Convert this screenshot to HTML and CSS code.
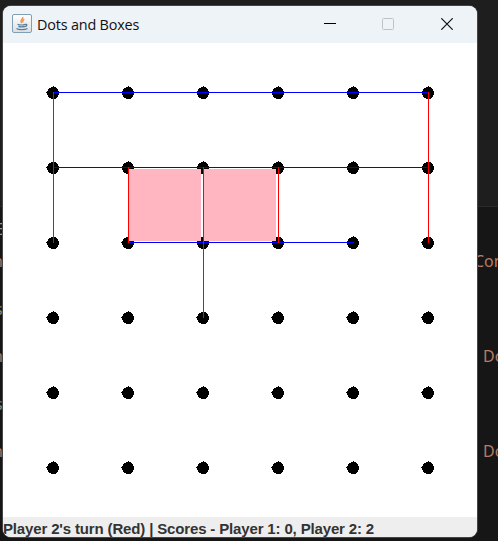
FILE: index.html
```
<!DOCTYPE html>
<html lang="en">
<head>
<meta charset="utf-8">
<title>Dots and Boxes</title>
<link rel="stylesheet" href="styles.css">
</head>
<body>
<div class="desktop">
  <div class="editor-seam"></div>
  <span class="code c1">Con</span>
  <span class="code c2">Do</span>
  <span class="code c3">Do</span>
  <span class="code l1">E</span>
  <span class="code l2">n</span>
  <span class="code l3">s</span>
  <span class="code l4">n</span>
  <span class="code l5">s</span>
  <span class="code l6">n</span>
  <main class="window">
    <header class="titlebar">
      <svg class="java" width="20" height="20" viewBox="0 0 20 20">
        <defs><linearGradient id="tile" x1="0" y1="0" x2="0" y2="1"><stop offset="0" stop-color="#fff"/><stop offset="1" stop-color="#dcdee0"/></linearGradient></defs>
        <rect x=".5" y=".5" width="19" height="18" rx="1.5" fill="url(#tile)" stroke="#7f9fb6"/>
        <path d="M10.700 3c1 2-3.500 2.700-1 6M12.300 5.200c-2 1.200-2 1.800-1 3.300" fill="none" stroke="#ef9448" stroke-width="1.400"/>
        <path d="M5.500 10.200c2 .8 6 .8 8 0M6.300 12.400c2 .6 4.500.6 6.400 0M13.500 10.200c2.200 0 1.500 2-.7 2.500M4.500 14.500c2 1.500 8.500 1.500 11 0" fill="none" stroke="#56809e" stroke-width="1.200"/>
      </svg>
      <h1>Dots and Boxes</h1>
      <div class="controls">
        <svg width="12" height="12" viewBox="0 0 12 12"><path d="M0 5.500h12" stroke="#000"/></svg>
        <svg width="12" height="12" viewBox="0 0 12 12"><rect x=".5" y=".5" width="11" height="11" rx="1" fill="none" stroke="#bfc2c5"/></svg>
        <svg width="12" height="12" viewBox="0 0 12 12"><path d="M.3.300l11.400 11.400M11.700.300L.3 11.700" stroke="#111" stroke-width="1.200"/></svg>
      </div>
    </header>
    <svg class="board" width="474" height="474" viewBox="3 43 474 474" shape-rendering="crispEdges">
      <defs>
        <path id="dot" d="M53 86h1v1h2v1h1v1h1v2h1v4h-1v2h-1v1h-1v1h-5v-1h-2v-1h-1v-2h-1v-2h-1v-1h1v-1h1v-2h1v-1h2v-1h2z"/>
        <g id="row"><use href="#dot"/><use href="#dot" x="75"/><use href="#dot" x="150"/><use href="#dot" x="225"/><use href="#dot" x="300"/><use href="#dot" x="375"/></g>
      </defs>
      <use href="#row"/><use href="#row" y="75"/><use href="#row" y="150"/><use href="#row" y="225"/><use href="#row" y="300"/><use href="#row" y="375"/>
      <path fill="#ffb6c1" d="M129 169h72v72h-72zM204 169h72v72h-72z"/>
      <path fill="#00f" d="M53 92h376v1H53zM53 167h376v1H53zM128 242h226v1H128z"/>
      <path fill="#f00" d="M53 92h1v151h-1zM128 167h1v76h-1zM203 167h1v151h-1zM278 167h1v76h-1zM428 92h1v151h-1z"/>
    </svg>
    <footer class="status">Player 2's turn (Red) | Scores - Player 1: 0, Player 2: 2</footer>
  </main>
</div>
</body>
</html>
```
FILE: styles.css
```
body { margin: 0; }
.desktop {
  position: relative;
  box-sizing: border-box;
  width: 498px;
  height: 541px;
  padding: 6px 0 0 3px;
  overflow: hidden;
  background: linear-gradient(#1e1e1e 206px, #161616 206px);
}
.editor-seam {
  position: absolute;
  top: 206px;
  left: 0;
  width: 100%;
  height: 1px;
  background: #2b2b2b;
}
.code {
  position: absolute;
  font: 16px/20px "Noto Sans", sans-serif;
  color: #b77b66;
}
.c1 { left: 474px; top: 251px; }
.c2 { left: 483px; top: 346px; }
.c3 { left: 483px; top: 441px; }
.l1 { left: -5px; top: 219px; color: #999; }
.l2 { left: -7px; top: 251px; }
.l3 { left: -5px; top: 299px; color: #829479; }
.l4 { left: -7px; top: 346px; }
.l5 { left: -5px; top: 394px; color: #829479; }
.l6 { left: -7px; top: 441px; }
.window {
  position: relative;
  display: flex;
  flex-direction: column;
  width: 474px;
  height: 531px;
  border-radius: 8px;
  overflow: hidden;
  background: #fff;
  box-shadow: 0 0 0 1px #444;
}
.titlebar {
  display: flex;
  align-items: center;
  box-sizing: border-box;
  height: 37px;
  padding: 0 24px 1px 9px;
  background: #eef3f8;
}
.java { display: block; }
h1 {
  margin: 1px 0 0 5px;
  font: 14.400px/20px "Open Sans", sans-serif;
  letter-spacing: -0.18px;
  color: #111;
}
.controls { display: flex; gap: 47px; margin-left: auto; }
.controls svg { display: block; }
.controls svg:first-child { margin-right: -1px; }
.board { display: block; }
.status {
  height: 20px;
  background: #eee;
  color: #333;
  font: bold 15px/23px "Liberation Sans", sans-serif;
  letter-spacing: -0.15px;
  white-space: nowrap;
}
```
